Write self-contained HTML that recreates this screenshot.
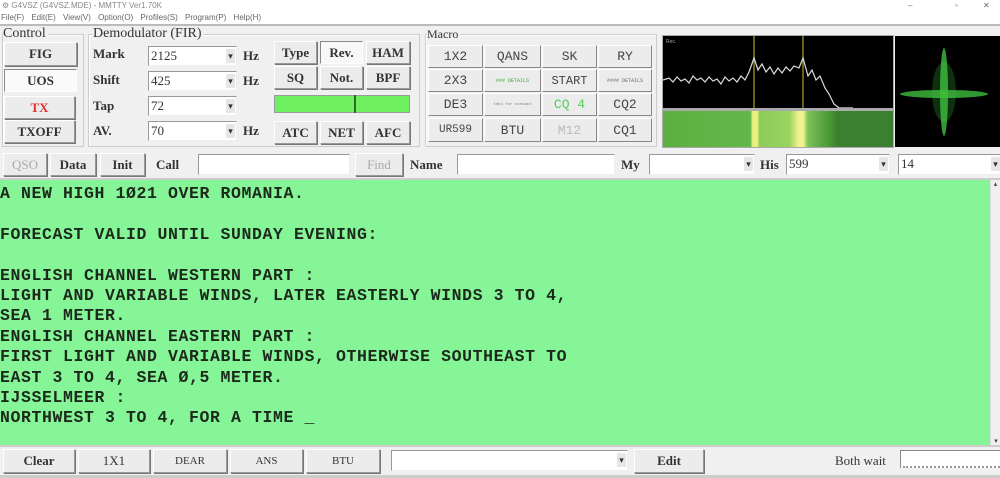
<!DOCTYPE html>
<html><head><meta charset="utf-8"><style>
*{box-sizing:border-box;margin:0;padding:0}
body{width:1000px;height:478px;background:#f0f0f0;position:relative;overflow:hidden;font-family:"Liberation Serif",serif;color:#222}
.a{position:absolute}
.btn{position:absolute;background:#ececec;border:1px solid #fff;border-right-color:#999;border-bottom-color:#999;box-shadow:1px 1px 0 #777;font:bold 13px "Liberation Serif",serif;display:flex;align-items:center;justify-content:center;color:#333}
.mb{position:absolute;background:#ececec;border:1px solid #fff;border-right-color:#888;border-bottom-color:#888;font:13px "Liberation Mono",monospace;display:flex;align-items:center;justify-content:center;color:#444}
.inp{position:absolute;background:#fff;border:1px solid #999;border-right-color:#eee;border-bottom-color:#eee;font:13px "Liberation Serif",serif;padding-left:2px;line-height:18px;color:#333}
.dd::after{content:"▾";position:absolute;right:1px;top:2px;font-size:9px;color:#333;background:#e6e6e6;width:9px;height:14px;line-height:14px;text-align:center}
.lbl{position:absolute;font:bold 13px "Liberation Serif",serif;color:#333}
.grp{position:absolute;border:1px solid #ccc;box-shadow:inset 1px 1px 0 #fff}
.txt{position:absolute;left:0;top:180px;width:990px;height:265px;background:#86f598;font:bold 16.5px "Liberation Mono",monospace;color:#1c2a1c;white-space:pre;line-height:20.4px;padding-top:4px;letter-spacing:0.6px}
</style></head><body>
<div class="a" style="left:0;top:0;width:1000px;height:11px;background:#fff;font:8px 'Liberation Sans',sans-serif;color:#888;line-height:11px;padding-left:2px">⚙ G4VSZ (G4VSZ.MDE) - MMTTY Ver1.70K<span style="position:absolute;left:908px;color:#666">–</span><span style="position:absolute;left:955px;color:#666">▫</span><span style="position:absolute;left:983px;color:#666">✕</span></div>
<div class="a" style="left:0;top:11px;width:1000px;height:13px;background:#fff;font:8px 'Liberation Sans',sans-serif;color:#666;line-height:13px;padding-left:1px;word-spacing:5px">File(F) Edit(E) View(V) Option(O) Profiles(S) Program(P) Help(H)</div>
<div class="a" style="left:0;top:24px;width:1000px;height:2px;background:#bbb"></div>

<div class="grp" style="left:2px;top:34px;width:82px;height:113px"></div>
<div class="lbl" style="left:3px;top:26px;font-weight:normal;font-size:14px;background:#f0f0f0;padding-right:2px">Control</div>
<div class="btn" style="left:4px;top:42px;width:73px;height:24px">FIG</div>
<div class="btn" style="left:4px;top:69px;width:73px;height:23px;background:#fafafa;box-shadow:none;border-color:#888 #fff #fff #888">UOS</div>
<div class="btn" style="left:4px;top:96px;width:71px;height:23px;color:#e03030">TX</div>
<div class="btn" style="left:4px;top:120px;width:71px;height:23px">TXOFF</div>

<div class="grp" style="left:88px;top:34px;width:332px;height:113px"></div>
<div class="lbl" style="left:93px;top:26px;font-weight:normal;font-size:14px;background:#f0f0f0;padding-right:2px">Demodulator (FIR)</div>
<div class="lbl" style="left:93px;top:46px">Mark</div>
<div class="lbl" style="left:93px;top:72px">Shift</div>
<div class="lbl" style="left:93px;top:98px">Tap</div>
<div class="lbl" style="left:93px;top:123px">AV.</div>
<div class="inp dd" style="left:148px;top:46px;width:89px;height:20px">2125</div>
<div class="inp dd" style="left:148px;top:71px;width:89px;height:20px">425</div>
<div class="inp dd" style="left:148px;top:96px;width:89px;height:20px">72</div>
<div class="inp dd" style="left:148px;top:121px;width:89px;height:20px">70</div>
<div class="lbl" style="left:243px;top:48px">Hz</div>
<div class="lbl" style="left:243px;top:73px">Hz</div>
<div class="lbl" style="left:243px;top:123px">Hz</div>
<div class="btn" style="left:274px;top:41px;width:43px;height:23px">Type</div>
<div class="btn" style="left:320px;top:41px;width:43px;height:23px;background:#f8f8f8;box-shadow:none;border-color:#888 #fff #fff #888">Rev.</div>
<div class="btn" style="left:366px;top:41px;width:44px;height:23px">HAM</div>
<div class="btn" style="left:274px;top:66px;width:43px;height:23px">SQ</div>
<div class="btn" style="left:320px;top:66px;width:43px;height:23px">Not.</div>
<div class="btn" style="left:366px;top:66px;width:44px;height:23px">BPF</div>
<div class="a" style="left:274px;top:95px;width:136px;height:18px;background:#6ef060;border:1px solid #999"></div>
<div class="a" style="left:354px;top:95px;width:2px;height:18px;background:#2a6a2a"></div>
<div class="btn" style="left:274px;top:121px;width:43px;height:23px">ATC</div>
<div class="btn" style="left:320px;top:121px;width:43px;height:23px">NET</div>
<div class="btn" style="left:366px;top:121px;width:44px;height:23px">AFC</div>

<div class="grp" style="left:425px;top:34px;width:232px;height:113px"></div>
<div class="lbl" style="left:427px;top:27px;font-weight:normal;font-size:12px;background:#f0f0f0;padding-right:2px">Macro</div>
<div class="mb" style="left:428px;top:45px;width:55px;height:23px">1X2</div>
<div class="mb" style="left:484px;top:45px;width:57px;height:23px">QANS</div>
<div class="mb" style="left:542px;top:45px;width:55px;height:23px">SK</div>
<div class="mb" style="left:598px;top:45px;width:54px;height:23px">RY</div>
<div class="mb" style="left:428px;top:69px;width:55px;height:23px">2X3</div>
<div class="mb" style="left:484px;top:69px;width:57px;height:23px;font-size:5px;color:#3a3">### DETAILS</div>
<div class="mb" style="left:542px;top:69px;width:55px;height:23px;font-size:12px">START</div>
<div class="mb" style="left:598px;top:69px;width:54px;height:23px;font-size:5px;color:#666">#### DETAILS</div>
<div class="mb" style="left:428px;top:93px;width:55px;height:23px">DE3</div>
<div class="mb" style="left:484px;top:93px;width:57px;height:23px;font-size:4px;color:#777">tnks for contact</div>
<div class="mb" style="left:542px;top:93px;width:55px;height:23px;color:#5c5">CQ 4</div>
<div class="mb" style="left:598px;top:93px;width:54px;height:23px">CQ2</div>
<div class="mb" style="left:428px;top:118px;width:55px;height:24px;font-size:11px">UR599</div>
<div class="mb" style="left:484px;top:118px;width:57px;height:24px">BTU</div>
<div class="mb" style="left:542px;top:118px;width:55px;height:24px;color:#bbb">M12</div>
<div class="mb" style="left:598px;top:118px;width:54px;height:24px">CQ1</div>

<div class="a" style="left:662px;top:35px;width:232px;height:113px;background:#aaa"></div>
<svg class="a" style="left:663px;top:36px" width="230" height="72" viewBox="0 0 230 72">
<rect width="230" height="72" fill="#000"/>
<text x="3" y="7" font-size="5" fill="#aaa" font-family="Liberation Sans">Rec.</text>
<line x1="91" y1="0" x2="91" y2="72" stroke="#8a8020" stroke-width="1.5"/>
<line x1="140" y1="0" x2="140" y2="72" stroke="#8a8020" stroke-width="1.5"/>
<polyline fill="none" stroke="#ddd" stroke-width="1.2" points="0,44 6,42 10,46 14,41 18,45 22,43 26,47 30,40 34,44 38,42 42,46 46,41 50,45 54,43 58,48 62,41 66,45 70,42 74,46 78,40 82,44 86,36 91,22 95,34 99,28 103,36 107,31 111,38 115,32 119,37 123,31 127,35 131,30 136,32 140,22 145,40 149,34 153,44 157,40 162,52 166,58 171,68 176,72 190,72"/>
</svg>
<div class="a" style="left:663px;top:111px;width:230px;height:36px;background:linear-gradient(90deg,#5cb040 0%,#62b84a 38%,#e8f080 39%,#e8f080 41%,#8ccc5a 42%,#9ad460 55%,#f0f490 59%,#f0f490 61%,#7cc05a 63%,#4a9a36 72%,#3a8030 76%,#3a8030 100%)"></div>
<svg class="a" style="left:895px;top:36px" width="105" height="111" viewBox="0 0 105 111">
<rect width="105" height="111" fill="#000"/>
<ellipse cx="49" cy="56" rx="12" ry="30" fill="#2a8a2a" opacity=".35"/>
<ellipse cx="49" cy="56" rx="4" ry="44" fill="#3fbf3f" opacity=".8"/>
<ellipse cx="49" cy="58" rx="44" ry="4" fill="#3fbf3f" opacity=".8"/>
</svg>

<div class="btn" style="left:3px;top:153px;width:44px;height:23px;color:#aaa;font-weight:normal">QSO</div>
<div class="btn" style="left:50px;top:153px;width:46px;height:23px">Data</div>
<div class="btn" style="left:100px;top:153px;width:45px;height:23px">Init</div>
<div class="lbl" style="left:156px;top:157px">Call</div>
<div class="inp" style="left:198px;top:154px;width:152px;height:21px"></div>
<div class="btn" style="left:355px;top:153px;width:48px;height:23px;color:#aaa;font-weight:normal">Find</div>
<div class="lbl" style="left:410px;top:157px">Name</div>
<div class="inp" style="left:457px;top:154px;width:158px;height:21px"></div>
<div class="lbl" style="left:621px;top:157px">My</div>
<div class="inp dd" style="left:649px;top:154px;width:106px;height:21px"></div>
<div class="lbl" style="left:760px;top:157px">His</div>
<div class="inp dd" style="left:786px;top:154px;width:104px;height:21px">599</div>
<div class="inp dd" style="left:898px;top:154px;width:104px;height:21px">14</div>

<div class="a" style="left:0;top:178px;width:1000px;height:2px;background:#ccc"></div>
<div class="txt">A NEW HIGH 1Ø21 OVER ROMANIA.

FORECAST VALID UNTIL SUNDAY EVENING:

ENGLISH CHANNEL WESTERN PART :
LIGHT AND VARIABLE WINDS, LATER EASTERLY WINDS 3 TO 4,
SEA 1 METER.
ENGLISH CHANNEL EASTERN PART :
FIRST LIGHT AND VARIABLE WINDS, OTHERWISE SOUTHEAST TO
EAST 3 TO 4, SEA Ø,5 METER.
IJSSELMEER :
NORTHWEST 3 TO 4, FOR A TIME _</div>
<div class="a" style="left:990px;top:180px;width:10px;height:265px;background:#f0f0f0;border-left:1px solid #ddd;font-size:7px;color:#444;text-align:center">▴<div style="position:absolute;bottom:0;width:10px">▾</div></div>
<div class="a" style="left:0;top:445px;width:1000px;height:2px;background:#ccc"></div>

<div class="btn" style="left:3px;top:449px;width:72px;height:24px">Clear</div>
<div class="btn" style="left:78px;top:449px;width:72px;height:24px;font-weight:normal">1X1</div>
<div class="btn" style="left:153px;top:449px;width:74px;height:24px;font-weight:normal;font-size:11px">DEAR</div>
<div class="btn" style="left:230px;top:449px;width:73px;height:24px;font-weight:normal;font-size:11px">ANS</div>
<div class="btn" style="left:306px;top:449px;width:74px;height:24px;font-weight:normal;font-size:11px">BTU</div>
<div class="inp dd" style="left:391px;top:450px;width:237px;height:21px"></div>
<div class="btn" style="left:634px;top:449px;width:70px;height:24px">Edit</div>
<div class="lbl" style="left:835px;top:453px;font-weight:normal">Both wait</div>
<div class="a" style="left:900px;top:450px;width:100px;height:18px;background:#fff;border-top:1px solid #888;border-left:1px solid #888"></div>
<div class="a" style="left:903px;top:466px;width:97px;height:2px;border-bottom:2px dotted #999"></div>
<div class="a" style="left:0;top:475px;width:1000px;height:3px;background:#ccc"></div>
</body></html>
